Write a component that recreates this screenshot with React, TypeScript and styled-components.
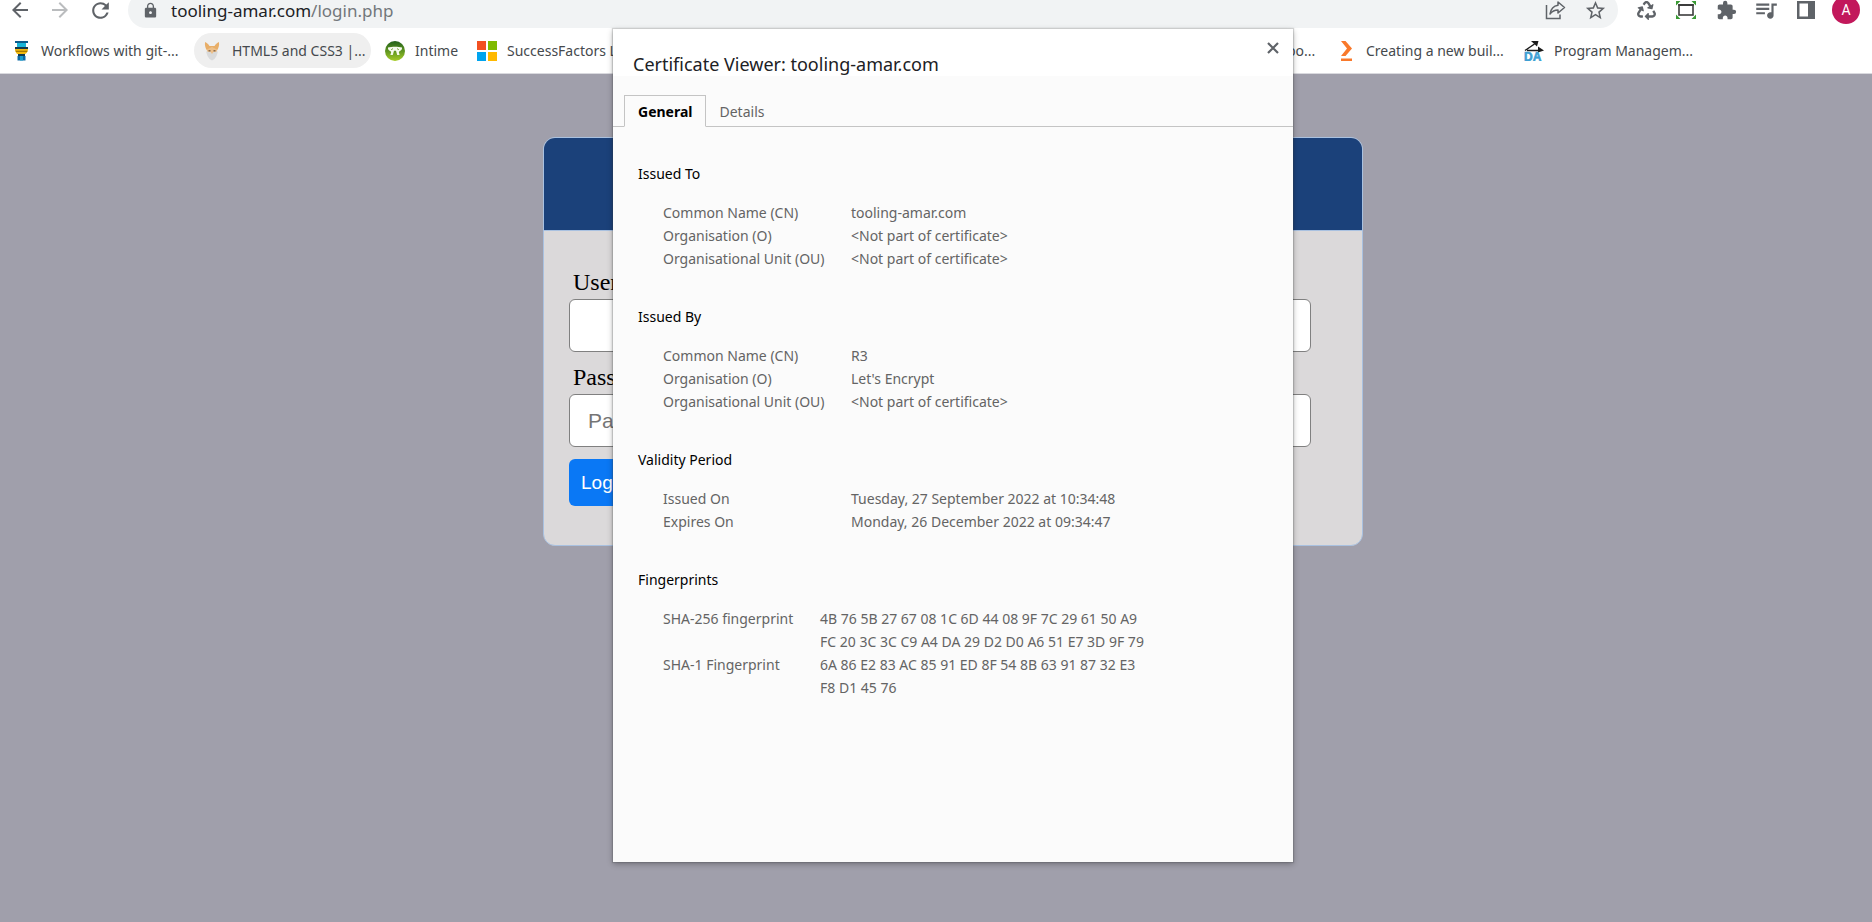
import React from 'react';
import styled, { createGlobalStyle, css } from 'styled-components';
import {
  MdArrowBack,
  MdArrowForward,
  MdExtension,
  MdLock,
  MdQueueMusic,
  MdRefresh,
  MdStarBorder,
} from 'react-icons/md';
import { FaRecycle } from 'react-icons/fa';

const uiFont = `"Noto Sans", "Open Sans", sans-serif`;

const GlobalStyle = createGlobalStyle`
  *, *::before, *::after { box-sizing: border-box; }
  body {
    margin: 0;
    background: #a09fab;
    font-family: ${uiFont};
    font-size: 14px;
  }
  button { font: inherit; border: 0; padding: 0; background: none; cursor: pointer; }
  svg { display: block; flex: none; }
`;

const Browser = styled.div`
  position: relative;
  min-height: 100vh;
  overflow: hidden;
`;

/* ---------- Toolbar ---------- */

const Toolbar = styled.header`
  display: flex;
  align-items: center;
  height: 36px;
  margin-top: -8px;
  padding-right: 6px;
  background: #fff;
`;

const ToolButton = styled.button<{ $faded?: boolean }>`
  display: flex;
  align-items: center;
  justify-content: center;
  flex: none;
  width: 40px;
  height: 36px;
  color: ${(p) => (p.$faded ? '#babcbe' : '#5f6368')};
`;

const AddressBar = styled.div`
  display: flex;
  align-items: center;
  flex: 1;
  height: 36px;
  margin: 0 8px;
  padding: 0 3px 0 14px;
  border-radius: 18px;
  background: #f1f3f4;
  color: #5f6368;
`;

const Address = styled.span`
  flex: 1;
  padding: 2px 0 0 12px;
  font-size: 17px;
  line-height: 18px;
  color: #73777b;
`;

const Host = styled.span`
  color: #202124;
`;

const Avatar = styled.span`
  display: flex;
  align-items: center;
  justify-content: center;
  width: 28px;
  height: 28px;
  border-radius: 50%;
  background: #c2185b;
  color: #fff;
  font-family: Roboto, sans-serif;
  font-size: 14px;
`;

/* ---------- Bookmarks ---------- */

const BookmarkBar = styled.nav`
  display: flex;
  align-items: center;
  height: 46px;
  border-bottom: 1px solid #d9d9de;
  background: #fff;
`;

const BookmarkGroup = styled.div<{ $leading?: boolean }>`
  display: flex;
  flex: none;
  gap: 6px;
  ${(p) =>
    p.$leading &&
    css`
      width: calc(50% + 343px);
      padding-left: 3px;
    `}
`;

const BookmarkLink = styled.a<{ $width: number; $hovered?: boolean }>`
  display: flex;
  align-items: center;
  flex: none;
  gap: 10px;
  width: ${(p) => p.$width}px;
  height: 35px;
  padding: 0 0 0 8px;
  border-radius: 18px;
  background: ${(p) => (p.$hovered ? '#efefef' : 'transparent')};
  color: #45494d;
  line-height: 20px;
  text-decoration: none;
  white-space: nowrap;
`;

/* ---------- Login page ---------- */

const LoginPage = styled.main`
  display: flex;
  justify-content: center;
  padding: 63px 0 64px 34px;
`;

const LoginCard = styled.section`
  width: 820px;
  max-width: 100%;
  border: 1px solid #a9c1e0;
  border-radius: 12px;
  overflow: hidden;
  background: #dbd9da;
`;

const CardBanner = styled.div`
  height: 93px;
  border-bottom: 1px solid #a9c1e0;
  background: #1b417a;
`;

const LoginForm = styled.form`
  display: flex;
  flex-direction: column;
  align-items: flex-start;
  gap: 12px;
  padding: 38px 51px 39px 25px;
`;

const Field = styled.div`
  display: flex;
  flex-direction: column;
  width: 100%;
`;

const FieldLabel = styled.label`
  padding: 0 0 4px 4px;
  font-family: "Liberation Serif", serif;
  font-size: 24px;
  line-height: 26px;
  color: #000;
`;

const FieldInput = styled.input`
  width: 100%;
  height: 53px;
  padding: 0 18px;
  border: 1px solid #808080;
  border-radius: 6px;
  background: #fff;
  font-family: "Liberation Sans", sans-serif;
  font-size: 21px;

  &::placeholder { color: #757575; opacity: 1; }
`;

const LoginButton = styled.button`
  height: 47px;
  padding: 0 12px;
  border-radius: 6px;
  background: #0a78f5;
  color: #fff;
  font-family: "Liberation Sans", sans-serif;
  font-size: 19px;
`;

/* ---------- Certificate dialog ---------- */

const Dialog = styled.div`
  position: absolute;
  top: 29px;
  left: calc(50% + 17px);
  width: 680px;
  transform: translateX(-50%);
  padding-bottom: 163px;
  background: #fbfbfb;
  box-shadow: 0 0 1px 1px rgba(60, 64, 67, 0.2), 0 2px 6px rgba(0, 0, 0, 0.3);
`;

const DialogHeader = styled.div`
  display: flex;
  justify-content: space-between;
  align-items: flex-start;
  height: 47px;
  padding: 0 10px 0 20px;
  background: #fff;
`;

const DialogTitle = styled.h1`
  margin: 0;
  padding-top: 23px;
  font-size: 18px;
  font-weight: 400;
  line-height: 24px;
  color: #202124;
`;

const CloseButton = styled.button`
  display: flex;
  align-items: center;
  justify-content: center;
  width: 20px;
  height: 20px;
  margin-top: 9px;
  color: #5f6368;
`;

const TabStrip = styled.div`
  display: flex;
  padding: 19px 0 0 11px;
  border-bottom: 1px solid #c4c4c4;
`;

const Tab = styled.button<{ $active?: boolean }>`
  height: 32px;
  margin-bottom: -1px;
  padding: 2px 12px 0 13px;
  border: 1px solid transparent;
  line-height: 20px;
  color: #646464;
  ${(p) =>
    p.$active &&
    css`
      border-color: #c4c4c4;
      border-bottom-color: #fbfbfb;
      background: #fbfbfb;
      color: #000;
      font-weight: 700;
    `}
`;

const DialogBody = styled.div`
  display: flex;
  flex-direction: column;
  gap: 35px;
  padding: 35px 25px 0;
`;

const SectionTitle = styled.h2`
  margin: 0 0 16px;
  font-size: 14px;
  font-weight: 400;
  line-height: 23px;
  color: #000;
`;

const FactTable = styled.table<{ $labelWidth: number }>`
  width: calc(100% - 25px);
  margin-left: 25px;
  border-collapse: collapse;
  table-layout: fixed;
  line-height: 23px;
  color: #646464;

  th {
    width: ${(p) => p.$labelWidth}px;
    padding: 0;
    font-weight: 400;
    text-align: left;
    vertical-align: top;
    white-space: nowrap;
  }
  td { padding: 0; white-space: pre-line; }
`;

/* ---------- Icons ---------- */

const ShareIcon = () => (
  <svg width="22" height="22" viewBox="0 0 22 22" fill="none" stroke="currentColor" strokeWidth="1.5">
    <path d="M2.500 6v13.500H16V15.500" />
    <path d="M14 3 20.500 8.500 14 14V11C10.500 11 8.300 12 6 15 6.700 10.500 9.500 7 14 6.300Z" strokeLinejoin="round" />
  </svg>
);

const CaptureIcon = () => (
  <svg width="22" height="22" viewBox="0 0 22 22">
    <rect x="4" y="6" width="14" height="10" fill="#fff" stroke="#3c3c3c" strokeWidth="1.6" />
    <path d="M3.200 6h15.600" stroke="#3c3c3c" strokeWidth="2" />
    <path
      d="M1 2h4.500L1 6.500zM21 2h-4.500L21 6.500zM1 20h4.500L1 15.500zM21 20h-4.500L21 15.500z"
      fill="#3a9a34"
    />
  </svg>
);

const SidePanelIcon = () => (
  <svg width="20" height="20" viewBox="0 0 20 20">
    <path d="M1 1h18v18H1zM3.500 3.500v13H12v-13z" fill="currentColor" fillRule="evenodd" />
  </svg>
);

const CloseIcon = () => (
  <svg width="12" height="12" viewBox="0 0 12 12" stroke="currentColor" strokeWidth="2.200">
    <path d="m1 1 10 10M11 1 1 11" />
  </svg>
);

const LighthouseIcon = () => (
  <svg width="20" height="20" viewBox="0 0 20 20">
    <path d="M4 0h13v2H4z" fill="#0d5c8c" />
    <path d="M6 2h9v4H6z" fill="#19b5d8" />
    <path d="M4 6h13v2H4z" fill="#16394a" />
    <path d="M4 8h13c0 3-2 5-3.500 5h-6C6 13.500 4 11 4 8z" fill="#f2b90f" />
    <path d="M4.500 9.800h12l-.4 1.200H5z" fill="#a87a00" />
    <path d="M7 13h7v2H7z" fill="#123b52" />
    <path d="M6.500 15h8v4.500h-8z" fill="#0c6aa6" />
    <path d="M9 15h3v4.500H9z" fill="#1aa0cf" />
  </svg>
);

const FoxIcon = () => (
  <svg width="20" height="20" viewBox="0 0 20 20">
    <path d="M3 1c2 1 3.500 2 4.500 4h5c1-2 2.500-3 4.500-4 .4 4-.5 6-2 8.500H5C3.500 7 2.600 5 3 1z" fill="#e8ae68" />
    <path d="M5 8.500 10 6l5 2.500c0 3-1 5-2.500 6h-5C6 13.500 5 11.500 5 8.500z" fill="#edc08a" />
    <path d="M4 10.500 8.500 11 10 13l1.500-2 4.500-.5-1.500 4.500-2 3L10 19.500 7.500 18l-2-3z" fill="#d9dadb" />
    <path d="M6.500 9h2v1.500h-2zM11.500 9h2v1.500h-2z" fill="#8a6b4c" />
  </svg>
);

const IntimeIcon = () => (
  <svg width="20" height="20" viewBox="0 0 20 20">
    <defs>
      <linearGradient id="intime" x1="0" y1="0" x2="0" y2="1">
        <stop offset="0" stopColor="#22601b" />
        <stop offset=".5" stopColor="#5e9420" />
        <stop offset="1" stopColor="#a7cd28" />
      </linearGradient>
    </defs>
    <circle cx="10" cy="10" r="10" fill="url(#intime)" />
    <path
      d="M3 6.500c4-1 10-1 14 0 .3 2-.8 3.200-2.200 3.400l-1 1 .8 3.100h-2.400l-1.200-4.200H9l-1.200 4.200H5.400l.8-3.100-1-1C3.800 9.700 2.700 8.500 3 6.500z"
      fill="#f6faee"
    />
    <path d="M7.500 7.500 6.500 9M12.500 7.500l1 1.500" stroke="#5e9420" />
  </svg>
);

const MicrosoftIcon = () => (
  <svg width="20" height="20" viewBox="0 0 20 20">
    <path d="M0 0h9v9H0z" fill="#f25022" />
    <path d="M11 0h9v9h-9z" fill="#7fba00" />
    <path d="M0 11h9v9H0z" fill="#00a4ef" />
    <path d="M11 11h9v9h-9z" fill="#ffb900" />
  </svg>
);

const ChevronIcon = () => (
  <svg width="20" height="20" viewBox="0 0 20 20" fill="#f9792b">
    <path d="M5 0h4.500L16 7.500 9.500 15H5l6-7.500z" />
    <path d="M5 17.500h11V20H5z" />
  </svg>
);

const DaIcon = () => (
  <svg width="20" height="20" viewBox="0 0 20 20">
    <path d="M1 9.500 10.500 3M3 9.500h13" stroke="#1b1b1b" strokeWidth="1.500" />
    <path d="M7 0h7.500L13 5.500zM14 5.500l6 4-6 2z" fill="#1b1b1b" />
    <text x="0" y="20" fill="#3d9fd3" stroke="#3d9fd3" strokeWidth=".6" fontFamily="Liberation Sans, sans-serif" fontSize="12" fontWeight="700">
      DA
    </text>
  </svg>
);

/* ---------- Content ---------- */

type BookmarkItem = { label: string; width: number; icon?: React.ReactNode; hovered?: boolean };

const leadingBookmarks: BookmarkItem[] = [
  { label: 'Workflows with git-...', width: 185, icon: <LighthouseIcon /> },
  { label: 'HTML5 and CSS3 |...', width: 177, icon: <FoxIcon />, hovered: true },
  { label: 'Intime', width: 86, icon: <IntimeIcon /> },
  { label: 'SuccessFactors L...', width: 177, icon: <MicrosoftIcon /> },
];

const trailingBookmarks: BookmarkItem[] = [
  { label: 'bo...', width: 43 },
  { label: 'Creating a new buil...', width: 182, icon: <ChevronIcon /> },
  { label: 'Program Managem...', width: 185, icon: <DaIcon /> },
];

const missing = '<Not part of certificate>';

const sections = [
  {
    title: 'Issued To',
    labelWidth: 188,
    rows: [
      ['Common Name (CN)', 'tooling-amar.com'],
      ['Organisation (O)', missing],
      ['Organisational Unit (OU)', missing],
    ],
  },
  {
    title: 'Issued By',
    labelWidth: 188,
    rows: [
      ['Common Name (CN)', 'R3'],
      ['Organisation (O)', "Let's Encrypt"],
      ['Organisational Unit (OU)', missing],
    ],
  },
  {
    title: 'Validity Period',
    labelWidth: 188,
    rows: [
      ['Issued On', 'Tuesday, 27 September 2022 at 10:34:48'],
      ['Expires On', 'Monday, 26 December 2022 at 09:34:47'],
    ],
  },
  {
    title: 'Fingerprints',
    labelWidth: 157,
    rows: [
      ['SHA-256 fingerprint', '4B 76 5B 27 67 08 1C 6D 44 08 9F 7C 29 61 50 A9\nFC 20 3C 3C C9 A4 DA 29 D2 D0 A6 51 E7 3D 9F 79'],
      ['SHA-1 Fingerprint', '6A 86 E2 83 AC 85 91 ED 8F 54 8B 63 91 87 32 E3\nF8 D1 45 76'],
    ],
  },
];

const Bookmarks = ({ items, leading }: { items: BookmarkItem[]; leading?: boolean }) => (
  <BookmarkGroup $leading={leading}>
    {items.map((item) => (
      <BookmarkLink key={item.label} href="#" $width={item.width} $hovered={item.hovered}>
        {item.icon}
        {item.label}
      </BookmarkLink>
    ))}
  </BookmarkGroup>
);

export default function App() {
  return (
    <Browser>
      <GlobalStyle />
      <Toolbar>
        <ToolButton aria-label="Back"><MdArrowBack size={24} /></ToolButton>
        <ToolButton aria-label="Forward" $faded><MdArrowForward size={24} /></ToolButton>
        <ToolButton aria-label="Reload"><MdRefresh size={25} /></ToolButton>
        <AddressBar>
          <MdLock size={17} />
          <Address>
            <Host>tooling-amar.com</Host>/login.php
          </Address>
          <ToolButton aria-label="Share"><ShareIcon /></ToolButton>
          <ToolButton aria-label="Bookmark this page"><MdStarBorder size={23} /></ToolButton>
        </AddressBar>
        <ToolButton aria-label="Recycle"><FaRecycle size={19} /></ToolButton>
        <ToolButton aria-label="Capture"><CaptureIcon /></ToolButton>
        <ToolButton aria-label="Extensions"><MdExtension size={21} /></ToolButton>
        <ToolButton aria-label="Media"><MdQueueMusic size={26} /></ToolButton>
        <ToolButton aria-label="Side panel"><SidePanelIcon /></ToolButton>
        <ToolButton aria-label="Profile"><Avatar>A</Avatar></ToolButton>
      </Toolbar>

      <BookmarkBar>
        <Bookmarks items={leadingBookmarks} leading />
        <Bookmarks items={trailingBookmarks} />
      </BookmarkBar>

      <LoginPage>
        <LoginCard>
          <CardBanner />
          <LoginForm>
            <Field>
              <FieldLabel htmlFor="username">Username</FieldLabel>
              <FieldInput id="username" type="text" />
            </Field>
            <Field>
              <FieldLabel htmlFor="password">Password</FieldLabel>
              <FieldInput id="password" type="password" placeholder="Password" />
            </Field>
            <LoginButton type="button">Login</LoginButton>
          </LoginForm>
        </LoginCard>
      </LoginPage>

      <Dialog role="dialog" aria-labelledby="certificate-title">
        <DialogHeader>
          <DialogTitle id="certificate-title">Certificate Viewer: tooling-amar.com</DialogTitle>
          <CloseButton aria-label="Close"><CloseIcon /></CloseButton>
        </DialogHeader>
        <TabStrip role="tablist">
          <Tab role="tab" aria-selected="true" $active>General</Tab>
          <Tab role="tab" aria-selected="false">Details</Tab>
        </TabStrip>
        <DialogBody>
          {sections.map((section) => (
            <section key={section.title}>
              <SectionTitle>{section.title}</SectionTitle>
              <FactTable $labelWidth={section.labelWidth}>
                <tbody>
                  {section.rows.map(([label, value]) => (
                    <tr key={label}>
                      <th scope="row">{label}</th>
                      <td>{value}</td>
                    </tr>
                  ))}
                </tbody>
              </FactTable>
            </section>
          ))}
        </DialogBody>
      </Dialog>
    </Browser>
  );
}
